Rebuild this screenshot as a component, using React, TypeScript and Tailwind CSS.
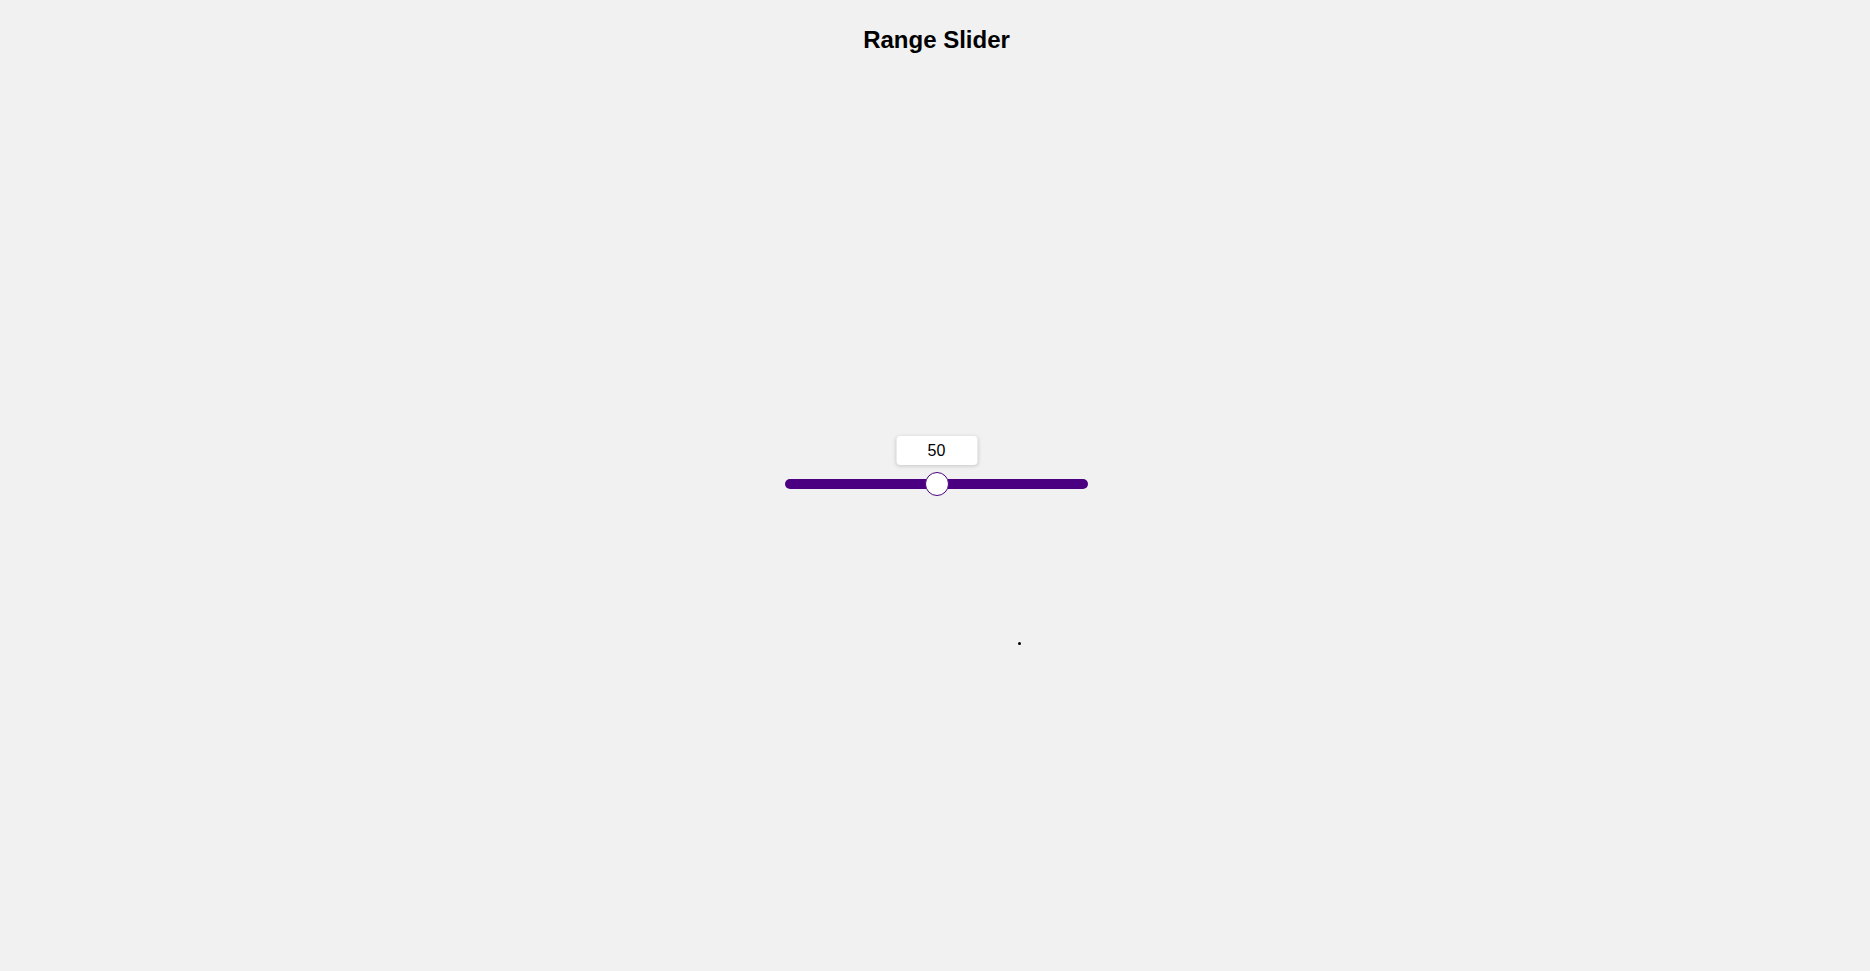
import React, { useState } from 'react';

export default function App() {
  const [value] = useState(50);
  const min = 0;
  const max = 100;
  const pct = ((value - min) / (max - min)) * 100;

  return (
    <div className="relative min-h-screen h-screen flex flex-col pl-[3px] bg-[#f1f1f1] text-black font-['Liberation_Sans',Arial,sans-serif]">
      <div className="h-[80px] pt-[24px] shrink-0">
        <h1 className="text-2xl font-bold text-center">Range Slider</h1>
      </div>

      <div className="flex-1 flex items-center justify-center pb-[83px]">
        <div className="relative w-[303px] h-[24px] flex items-center">
          <div className="w-full h-[10px] rounded-[5px] bg-[#4b0082]" />

          {/* thumb + value bubble */}
          <div
            className="absolute top-0 w-[24px] h-[24px] -ml-[12px]"
            style={{ left: `${pct}%` }}
          >
            <div className="w-[24px] h-[24px] rounded-full bg-white border border-[#4b0082]" />
            <div className="absolute bottom-[31px] left-1/2 -translate-x-1/2 w-[81px] h-[29px] rounded bg-white shadow-[0_1px_4px_rgba(0,0,0,0.18)] flex items-center justify-center text-base">
              {value}
            </div>
          </div>
        </div>
      </div>

      <div className="absolute left-[1018px] top-[642px] w-[3px] h-[3px] rounded-full bg-black" />
    </div>
  );
}
